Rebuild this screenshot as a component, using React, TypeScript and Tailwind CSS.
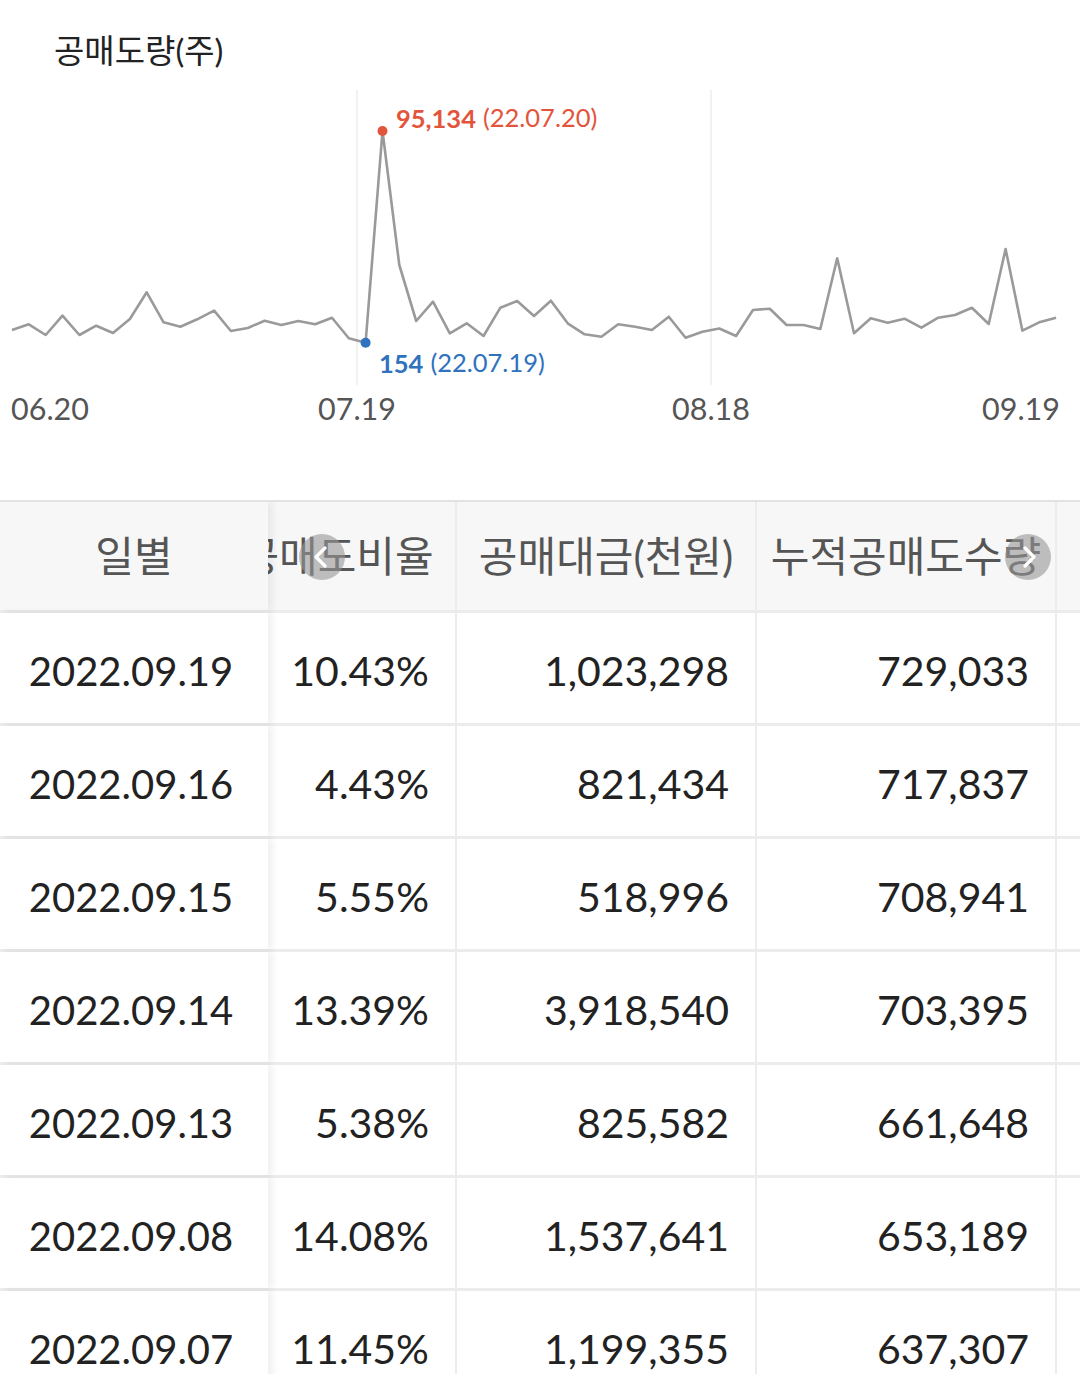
import React from "react";

// chart points in page coords (y values), x spaced evenly
const ys = [
  330, 324.3, 335, 315.7, 335, 325.7, 333, 319, 292.3, 322.3, 326.7, 319.3, 310.7, 331, 328, 320.7,
  325, 321, 324.3, 317.7, 338.3, 342.7, 131, 265, 321, 301.7, 333.3, 323.3, 336, 307.7, 301, 316,
  300.7, 323.3, 334.3, 336.7, 324.3, 326.7, 330, 316.7, 337.7, 331.7, 328.5, 336, 310, 308.7, 325,
  325, 329, 258.3, 333.3, 318.3, 322.7, 318.7, 327.7, 317.7, 315, 307.7, 324, 249, 330.7, 322.3,
  317.7,
];

const TOP = 80;
const points = ys.map((y, i) => `${(12 + i * 16.84).toFixed(1)},${(y - TOP).toFixed(1)}`).join(" ");

const rows = [
  ["2022.09.19", "10.43%", "1,023,298", "729,033"],
  ["2022.09.16", "4.43%", "821,434", "717,837"],
  ["2022.09.15", "5.55%", "518,996", "708,941"],
  ["2022.09.14", "13.39%", "3,918,540", "703,395"],
  ["2022.09.13", "5.38%", "825,582", "661,648"],
  ["2022.09.08", "14.08%", "1,537,641", "653,189"],
  ["2022.09.07", "11.45%", "1,199,355", "637,307"],
];

const Chevron = ({ dir }: { dir: "left" | "right" }) => (
  <svg width="20" height="22" viewBox="0 0 20 22" fill="none">
    <path
      d={dir === "left" ? "M14 2 L5 11 L14 20" : "M6 2 L15 11 L6 20"}
      stroke="white"
      strokeWidth="3.2"
      strokeLinecap="round"
      strokeLinejoin="round"
    />
  </svg>
);

const App: React.FC = () => {
  return (
    <div className="w-[1080px] h-[1374px] overflow-hidden bg-white font-['Lato','Noto_Sans_CJK_KR',sans-serif]">
      {/* Title */}
      <div className="h-[80px] pl-[54px] pt-[30px] text-[33px] leading-[40px] text-[#222]">공매도량(주)</div>

      {/* Chart */}
      <svg width="1080" height="420" viewBox="0 0 1080 420" className="block">
        <line x1="357" y1="10" x2="357" y2="305" stroke="#ececec" strokeWidth="1.5" />
        <line x1="711" y1="10" x2="711" y2="305" stroke="#ececec" strokeWidth="1.5" />
        <polyline points={points} fill="none" stroke="#9a9a9a" strokeWidth="2.6" strokeLinejoin="round" />
        <circle cx="382.5" cy={131 - TOP} r="5" fill="#e2553c" />
        <circle cx="365.6" cy={342.7 - TOP} r="5" fill="#2f72bd" />
        <text x="396" y={121 - TOP} fontSize="25.5" fill="#e2553c" dominantBaseline="middle">
          <tspan fontWeight="700">95,134</tspan>
          <tspan dx="7">(22.07.20)</tspan>
        </text>
        <text x="379" y={366 - TOP} fontSize="25.5" fill="#2f72bd" dominantBaseline="middle">
          <tspan fontWeight="700">154</tspan>
          <tspan dx="7">(22.07.19)</tspan>
        </text>
        <g fontSize="30.5" fill="#555">
          <text x="11" y={412 - TOP} dominantBaseline="middle">06.20</text>
          <text x="357" y={412 - TOP} dominantBaseline="middle" textAnchor="middle">07.19</text>
          <text x="711" y={412 - TOP} dominantBaseline="middle" textAnchor="middle">08.18</text>
          <text x="1060" y={412 - TOP} dominantBaseline="middle" textAnchor="end">09.19</text>
        </g>
      </svg>

      {/* Table */}
      <div className="relative overflow-hidden border-t-2 border-[#e2e2e2]">
        <div className="flex h-[111px] bg-[#f7f7f7] border-b-[3px] border-[#ececec] text-[42px] text-[#555]">
          <div className="relative z-10 w-[268px] shrink-0 flex items-center justify-center bg-[#f7f7f7] shadow-[5px_0_7px_rgba(0,0,0,0.06)]">
            일별
          </div>
          <div className="w-[229px] shrink-0 -ml-[40px] flex items-center justify-center border-r-2 border-[#ececec] pr-[9px] whitespace-nowrap">
            공매도비율
          </div>
          <div className="w-[300px] shrink-0 flex items-center justify-center border-r-2 border-[#ececec] whitespace-nowrap">
            공매대금(천원)
          </div>
          <div className="w-[300px] shrink-0 flex items-center justify-center border-r-2 border-[#ececec] whitespace-nowrap">
            누적공매도수량
          </div>
          <div className="w-[300px] shrink-0" />
        </div>

        {rows.map((r) => (
          <div key={r[0]} className="flex h-[113px] border-b-[3px] border-[#ececec] text-[41px] text-[#222]">
            <div className="relative z-10 w-[268px] shrink-0 flex items-center justify-center bg-white shadow-[5px_0_7px_rgba(0,0,0,0.06)] pr-[6px] pt-[6px] text-[40px]">
              {r[0]}
            </div>
            <div className="w-[229px] shrink-0 -ml-[40px] flex items-center justify-end pr-[26px] pt-[6px] border-r-2 border-[#ececec]">
              {r[1]}
            </div>
            <div className="w-[300px] shrink-0 flex items-center justify-end pr-[26px] pt-[6px] border-r-2 border-[#ececec]">
              {r[2]}
            </div>
            <div className="w-[300px] shrink-0 flex items-center justify-end pr-[26px] pt-[6px] border-r-2 border-[#ececec]">
              {r[3]}
            </div>
            <div className="w-[300px] shrink-0" />
          </div>
        ))}

        {/* scroll arrows */}
        <div className="absolute z-20 left-[299px] top-[32px] w-[46px] h-[46px] rounded-full bg-[rgba(150,150,150,0.6)] flex items-center justify-center pr-[2px]">
          <Chevron dir="left" />
        </div>
        <div className="absolute z-20 left-[1005px] top-[32px] w-[46px] h-[46px] rounded-full bg-[rgba(150,150,150,0.6)] flex items-center justify-center pl-[2px]">
          <Chevron dir="right" />
        </div>
      </div>
    </div>
  );
};

export default App;
